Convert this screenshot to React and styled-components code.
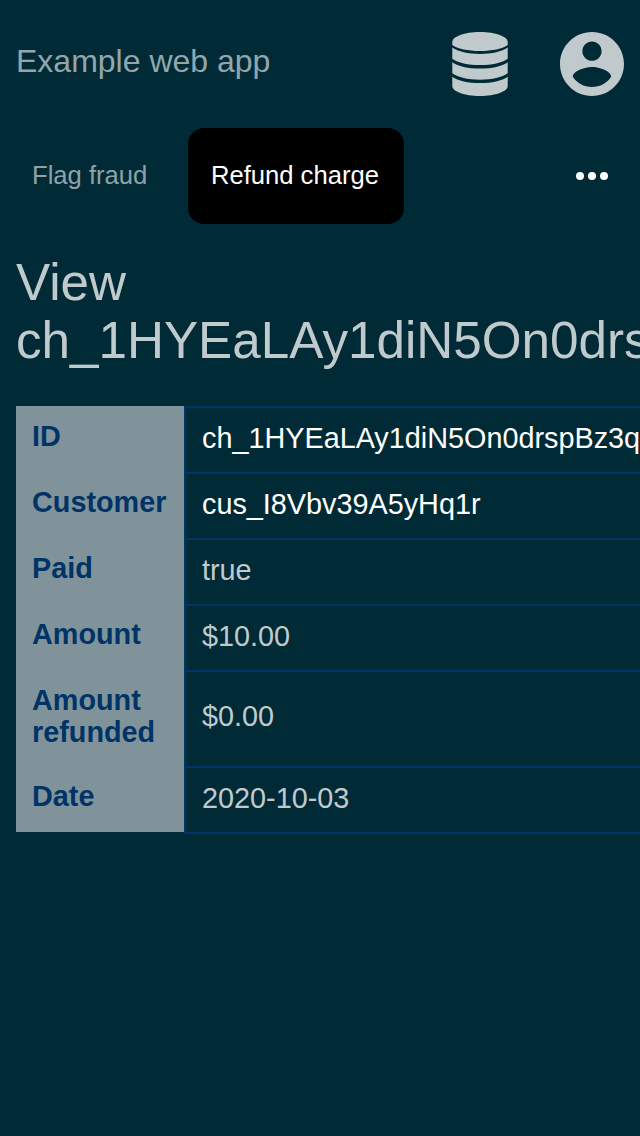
import React from "react";
import styled, { createGlobalStyle } from "styled-components";

const GlobalStyle = createGlobalStyle`
  html, body {
    margin: 0;
    background: #002b36;
    overflow: hidden;
  }
  * { box-sizing: border-box; }
`;

const Page = styled.div`
  width: 100%;
  height: 100vh;
  overflow: hidden;
  padding: 0 16px;
  background: #002b36;
  color: #c0cacd;
  font-family: "Liberation Sans", Arial, sans-serif;
`;

const Header = styled.header`
  display: flex;
  align-items: center;
  height: 128px;
`;

const AppName = styled.div`
  flex: 1;
  padding-bottom: 6px;
  color: #93a6ab;
  font-size: 32px;
  line-height: 36px;
`;

const HeaderIcons = styled.div`
  display: flex;
  gap: 48px;
`;

const HeaderIcon = styled.svg`
  display: block;
  width: 64px;
  height: 64px;
  fill: #c0cacd;
`;

const Toolbar = styled.nav`
  display: flex;
  align-items: center;
  height: 96px;
`;

const Action = styled.button`
  height: 96px;
  border: 0;
  border-radius: 16px;
  margin: 0;
  padding: 0 ${(p) => (p.$active ? "24px 2px 23px" : "16px 2px")};
  margin-left: ${(p) => (p.$active ? "24.75px" : "0")};
  width: ${(p) => (p.$active ? "216px" : "auto")};
  background: ${(p) => (p.$active ? "#000" : "transparent")};
  color: ${(p) => (p.$active ? "#fff" : "#8fa2a8")};
  font: 25.6px/30px "Liberation Sans", Arial, sans-serif;
  text-align: left;
  white-space: nowrap;
`;

const MoreButton = styled.button`
  margin: 0 16px 0 auto;
  padding: 0;
  border: 0;
  background: transparent;
`;

const Dots = styled.svg`
  display: block;
  width: 32px;
  height: 8px;
  fill: #fff;
`;

const Title = styled.h1`
  margin: 30px 0 36px;
  font-size: 51.2px;
  font-weight: 400;
  line-height: 58px;
`;

const Details = styled.dl`
  width: 720px;
  margin: 0;
`;

const Row = styled.div`
  display: grid;
  grid-template-columns: 168px 1fr;
  height: ${(p) => (p.$tall ? "96px" : "66px")};
`;

const Label = styled.dt`
  padding: 14px 0 0 16px;
  background: #80939a;
  color: #003366;
  font-size: 28.8px;
  font-weight: 700;
  line-height: 32px;
`;

const Value = styled.dd`
  margin: 0;
  padding: ${(p) => (p.$tall ? "28px" : "14px")} 0 0 16px;
  border-top: 2px solid #003366;
  border-left: 2px solid #003366;
  color: ${(p) => (p.$link ? "#fff" : "#c0cacd")};
  font-size: 28.8px;
  line-height: 32px;
  white-space: nowrap;
`;

const TableEnd = styled.div`
  height: 2px;
  margin-left: 168px;
  background: #003366;
`;

const rows = [
  { label: "ID", value: "ch_1HYEaLAy1diN5On0drspBz3q", link: true },
  { label: "Customer", value: "cus_I8Vbv39A5yHq1r", link: true },
  { label: "Paid", value: "true" },
  { label: "Amount", value: "$10.00" },
  { label: "Amount refunded", value: "$0.00", tall: true },
  { label: "Date", value: "2020-10-03" },
];

const DatabaseIcon = () => (
  <HeaderIcon viewBox="-4 0 64 64" aria-label="Data">
    <path d="M28 0C43.5 0 55.7 4.5 55.7 10V13C51 16.8 40 19 28 19S5 16.8.3 13V10C.3 4.500 12.500 0 28 0z" />
    <path d="M.3 15.600C6 19.800 16 22 28 22S50 19.800 55.700 15.600V26.700C50 30.900 40 33.100 28 33.100S6 30.900.3 26.700z" />
    <path d="M.3 30.200C6 34.400 16 36.600 28 36.600S50 34.400 55.700 30.200V41.300C50 45.500 40 47.700 28 47.700S6 45.500.3 41.300z" />
    <path d="M.3 44.800C6 49 16 51.100 28 51.100S50 49 55.700 44.800V54C55.700 59.500 43.500 64 28 64S.3 59.500.3 54z" />
  </HeaderIcon>
);

const AccountIcon = () => (
  <HeaderIcon viewBox="2 2 20 20" aria-label="Account">
    <path d="M12 2C6.48 2 2 6.48 2 12s4.48 10 10 10 10-4.48 10-10S17.52 2 12 2zm0 3c1.66 0 3 1.34 3 3s-1.34 3-3 3-3-1.34-3-3 1.34-3 3-3zm0 14.2c-2.5 0-4.71-1.28-6-3.22.03-1.99 4-3.08 6-3.08 1.99 0 5.97 1.09 6 3.08-1.29 1.94-3.5 3.22-6 3.22z" />
  </HeaderIcon>
);

export default function App() {
  return (
    <>
      <GlobalStyle />
      <Page>
        <Header>
          <AppName>Example web app</AppName>
          <HeaderIcons>
            <DatabaseIcon />
            <AccountIcon />
          </HeaderIcons>
        </Header>
        <Toolbar>
          <Action>Flag fraud</Action>
          <Action $active>Refund charge</Action>
          <MoreButton aria-label="More actions">
            <Dots viewBox="0 0 32 8">
              <circle cx="4" cy="4" r="4" />
              <circle cx="16" cy="4" r="4" />
              <circle cx="28" cy="4" r="4" />
            </Dots>
          </MoreButton>
        </Toolbar>
        <Title>View ch_1HYEaLAy1diN5On0drspBz3q</Title>
        <Details>
          {rows.map((row) => (
            <Row key={row.label} $tall={row.tall}>
              <Label>{row.label}</Label>
              <Value $link={row.link} $tall={row.tall}>{row.value}</Value>
            </Row>
          ))}
          <TableEnd />
        </Details>
      </Page>
    </>
  );
}
